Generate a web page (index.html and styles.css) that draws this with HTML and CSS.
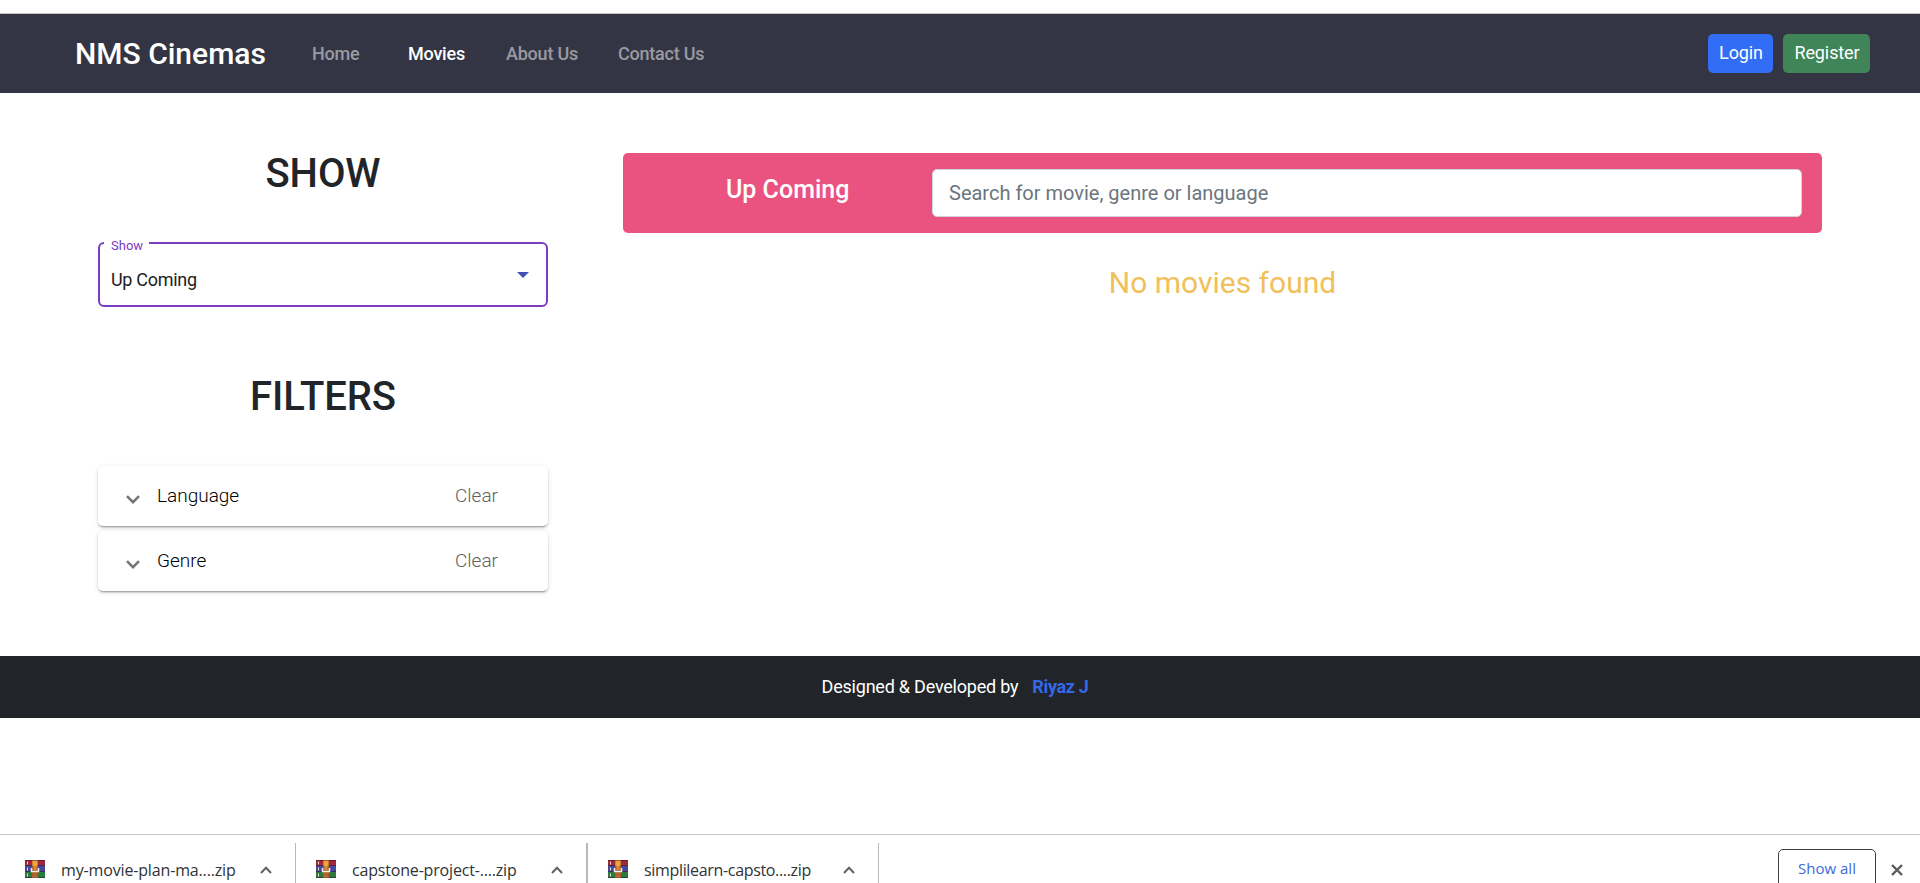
FILE: index.html
```html
<!DOCTYPE html>
<html lang="en">
<head>
<meta charset="utf-8">
<title>NMS Cinemas</title>
<link rel="stylesheet" href="styles.css">
</head>
<body>
<svg class="defs" width="0" height="0" aria-hidden="true">
  <symbol id="archive" viewBox="0 0 20 18">
    <rect width="20" height="6" fill="#a3263f"/><rect y="6" width="20" height="6" fill="#4648a0"/><rect y="12" width="20" height="6" fill="#2c7a3d"/>
    <path d="M0 5.5h20M0 11.5h20M0 17.5h20" stroke="#30283a" opacity=".7"/>
    <path d="M0 .5h20" stroke="#6e1a2c"/>
    <path d="M2.5 1.5v3M2.5 7.500v3M2.500 13.500v3" stroke="#e3d9c0"/>
    <rect x="7" width="6" height="18" fill="#a65c2c"/>
    <rect x="7.500" y="1" width="5" height="5" rx="1" fill="#eda63b"/>
    <path d="M6.500 8v3.500h7V8" fill="none" stroke="#f1eee8" stroke-width="1.500"/>
    <rect x="8.500" y="6" width="3" height="4" fill="#d88b35"/>
    <path d="M8 13h4M8 16h4" stroke="#d17a33"/>
  </symbol>
  <symbol id="up" viewBox="0 0 12 8"><path d="M1 7l5-5.200L11 7" fill="none" stroke="#5f6368" stroke-width="2"/></symbol>
  <symbol id="down" viewBox="0 0 14 9"><path d="M1 1.200l6 6 6-6" fill="none" stroke="#757575" stroke-width="2.600"/></symbol>
</svg>
<div class="page">
  <header class="navbar">
    <a class="brand">NMS Cinemas</a>
    <nav class="links">
      <a class="link link-home">Home</a>
      <a class="link link-movies active">Movies</a>
      <a class="link link-about">About Us</a>
      <a class="link link-contact">Contact Us</a>
    </nav>
    <div class="actions">
      <button class="btn btn-login">Login</button>
      <button class="btn btn-register">Register</button>
    </div>
  </header>
  <main class="main">
    <aside class="sidebar">
      <h1 class="heading">SHOW</h1>
      <fieldset class="select">
        <legend class="select-label">Show</legend>
        <span class="select-value">Up Coming</span>
        <svg class="caret" width="12" height="6" viewBox="0 0 12 6"><path d="M0 0h12L6 6z" fill="#3f51b5"/></svg>
      </fieldset>
      <h1 class="heading heading-filters">FILTERS</h1>
      <div class="panels">
        <div class="panel"><svg class="chevron"><use href="#down"/></svg><span class="panel-title">Language</span><span class="clear">Clear</span></div>
        <div class="panel"><svg class="chevron"><use href="#down"/></svg><span class="panel-title">Genre</span><span class="clear">Clear</span></div>
      </div>
    </aside>
    <section class="content">
      <div class="banner">
        <h2 class="banner-title">Up Coming</h2>
        <input class="search" type="text" placeholder="Search for movie, genre or language">
      </div>
      <p class="empty"><span>No movies found</span></p>
    </section>
  </main>
  <footer class="footer"><span class="credit">Designed &amp; Developed by</span><a class="author">Riyaz J</a></footer>
  <div class="downloads">
    <div class="file"><svg class="zip"><use href="#archive"/></svg><span class="name name-a">my-movie-plan-ma....zip</span><svg class="up"><use href="#up"/></svg></div>
    <div class="file file-second"><svg class="zip"><use href="#archive"/></svg><span class="name name-b">capstone-project-....zip</span><svg class="up"><use href="#up"/></svg></div>
    <div class="file file-third"><svg class="zip"><use href="#archive"/></svg><span class="name name-c">simplilearn-capsto....zip</span><svg class="up"><use href="#up"/></svg></div>
    <button class="show-all">Show all</button>
    <svg class="close" width="12" height="12" viewBox="0 0 12 12"><path d="M1 1l10 10M11 1L1 11" stroke="#5a5a5a" stroke-width="2.400"/></svg>
  </div>
</div>
</body>
</html>
```
FILE: styles.css
```css
* { box-sizing: border-box; }
body { margin: 0; background: #fff; color: #212529; font-family: Roboto, "Liberation Sans", sans-serif; }
h1, h2, p { margin: 0; }
button { font-family: inherit; }
.defs { display: block; }
.page { height: 883px; padding-top: 13px; display: flex; flex-direction: column; overflow: hidden; }

.navbar { height: 80px; flex: none; display: flex; align-items: center; padding: 0 50px 0 75px; background: #343544; border-top: 1px solid #c6c6c6; }
.brand { width: 237px; color: #fff; font-size: 30px; font-weight: 500; line-height: 40px; white-space: nowrap; }
.links { display: flex; font-size: 18px; font-weight: 500; line-height: 26px; letter-spacing: -0.22px; }
.link { color: #9a9aa1; white-space: nowrap; }
.link-home { width: 96px; }
.link-movies { width: 98px; }
.link-about { width: 112px; }
.link.active { color: #fff; }
.actions { margin-left: auto; display: flex; gap: 10px; }
.btn { height: 39px; padding: 0 0 2px 1px; border: 0; border-radius: 5px; color: #fff; font-size: 18px; line-height: 26px; letter-spacing: -0.1px; }
.btn-login { width: 65px; background: #326df5; }
.btn-register { width: 87px; background: #408558; }

.main { height: 563px; flex: none; display: flex; padding: 60px 98px 0; }
.sidebar { width: 450px; margin-right: 75px; }
.heading { height: 48px; margin-top: -3px; text-align: center; font-size: 40px; font-weight: 500; line-height: 48px; letter-spacing: -0.1px; }
.select { width: 450px; height: 74px; margin: 35px 0 0; padding: 0 20px 0 11px; border: 2px solid #7b3cc0; border-radius: 6px; position: relative; min-width: 0; }
.select-label { margin-left: -7px; padding: 5px 6px 0 7px; color: #7b3cc0; font-size: 13px; line-height: 15px; }
.select-value { display: block; color: #212121; font-size: 18px; line-height: 24px; margin-top: 15px; letter-spacing: -0.3px; }
.caret { position: absolute; right: 17px; top: 19px; }
.heading-filters { margin-top: 66px; }
.panels { margin-top: 45px; display: flex; flex-direction: column; gap: 5px; }
.panel { height: 60px; padding: 0 50px 0 28px; display: flex; align-items: center; border-radius: 5px; background: #fff; font-size: 19px; font-weight: 300; line-height: 24px; box-shadow: 0 3px 1px -2px rgba(0,0,0,.2), 0 2px 2px rgba(0,0,0,.14), 0 1px 5px rgba(0,0,0,.12); }
.chevron { width: 14px; height: 9px; margin: 7px 17px 0 0; }
.panel-title { color: #000; }
.clear { margin-left: auto; color: #616161; }

.content { flex: 1; }
.banner { height: 80px; padding: 16px 20px 16px 103px; display: flex; background: #ea5280; border-radius: 5px; }
.banner-title { width: 206px; height: 40px; color: #fff; font-size: 25px; font-weight: 500; line-height: 42px; }
.search { width: 870px; height: 48px; padding: 0 16px; border: 1px solid #ced4da; border-radius: 5px; font: 20px Roboto, sans-serif; color: #212529; }
.search::placeholder { color: #6c757d; opacity: 1; }
.empty { margin-top: 32px; text-align: center; color: #f0c05a; font-size: 30px; line-height: 36px; }

.footer { height: 62px; flex: none; display: flex; justify-content: center; padding: 18px 10px 0 0; gap: 14px; background: #212529; color: #fff; font-size: 18px; line-height: 26px; letter-spacing: -0.22px; }
.author { color: #3568e8; font-weight: 700; letter-spacing: -0.35px; }

.downloads { height: 49px; flex: none; margin-top: 116px; padding: 8px 17px 0 0; display: flex; border-top: 1px solid #c8c8c8; font-family: "Open Sans", "Noto Sans", sans-serif; }
.file { width: 296px; height: 42px; padding: 17px 0 0 25px; display: flex; flex: none; border-right: 1px solid #b8b8b8; }
.file:nth-child(n+2) { width: 292px; padding-left: 20px; }
.downloads .file-second { border-right-width: 2px; }
.downloads .file-third { width: 291px; }
.zip { width: 20px; height: 18px; flex: none; }
.name { width: 198px; margin: -2px 0 0 16px; color: #303336; font-size: 16px; line-height: 24px; white-space: nowrap; }
.name-a { letter-spacing: -0.15px; }
.name-b { letter-spacing: -0.18px; }
.name-c { letter-spacing: -0.33px; }
.up { width: 12px; height: 8px; margin: 6px 0 0 1px; }
.show-all { width: 98px; height: 43px; margin: 6px 0 0 auto; padding: 0 0 6px; flex: none; border: 1px solid #3c4043; border-radius: 5px; background: #fff; color: #3d6ad6; font-family: inherit; font-size: 15px; }
.close { margin: 21px 0 0 15px; }
```
